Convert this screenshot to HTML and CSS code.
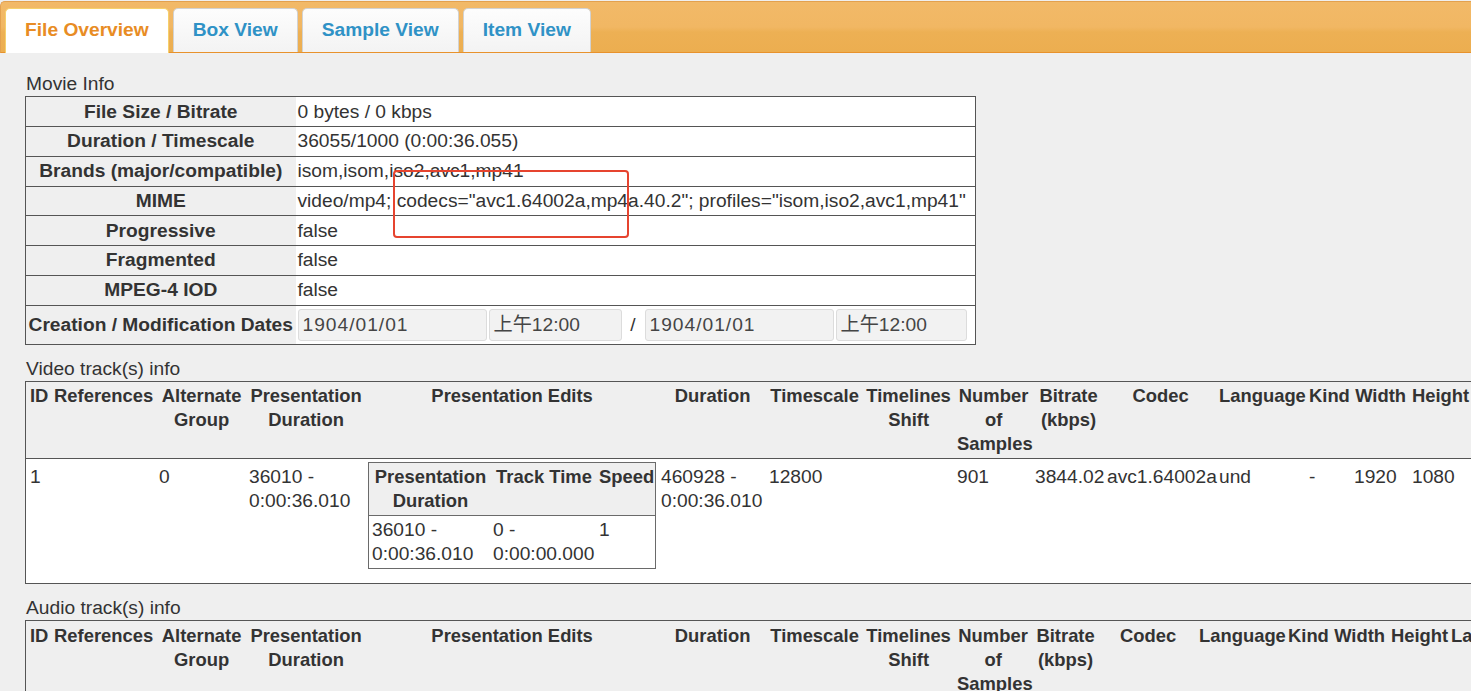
FILE: index.html
```html
<!DOCTYPE html>
<html lang="en">
<head>
<meta charset="utf-8">
<title>MP4 File Overview</title>
<link rel="stylesheet" href="styles.css">
</head>
<body>
<div class="tabs">
  <ul class="tab-nav">
    <li class="tab active">File Overview</li>
    <li class="tab">Box View</li>
    <li class="tab">Sample View</li>
    <li class="tab">Item View</li>
  </ul>
  <div class="panel">
    <div class="section-label">Movie Info</div>
    <table class="movie">
      <colgroup><col class="movie-label"><col></colgroup>
      <tr><th>File Size / Bitrate</th><td>0 bytes / 0 kbps</td></tr>
      <tr><th>Duration / Timescale</th><td>36055/1000 (0:00:36.055)</td></tr>
      <tr><th>Brands (major/compatible)</th><td>isom,isom,iso2,avc1,mp41</td></tr>
      <tr><th>MIME</th><td>video/mp4; codecs="avc1.64002a,mp4a.40.2"; profiles="isom,iso2,avc1,mp41"</td></tr>
      <tr><th>Progressive</th><td>false</td></tr>
      <tr><th>Fragmented</th><td>false</td></tr>
      <tr><th>MPEG-4 IOD</th><td>false</td></tr>
      <tr class="dates-row"><th>Creation / Modification Dates</th><td>
        <div class="dates">
          <span class="field date">1904/01/01</span>
          <span class="field time">上午12:00</span>
          <span class="sep">/</span>
          <span class="field date">1904/01/01</span>
          <span class="field time last">上午12:00</span>
        </div>
      </td></tr>
    </table>
    <div class="highlight"></div>

    <div class="section-label">Video track(s) info</div>
    <table class="tracks video">
      <colgroup>
        <col class="c-id"><col class="c-ref"><col class="c-alt"><col class="c-pres"><col class="c-edits"><col class="c-dur"><col class="c-ts"><col class="c-shift"><col class="c-num"><col class="v-bitrate"><col class="v-codec"><col class="v-lang"><col class="c-kind"><col class="c-width"><col class="v-height">
      </colgroup>
      <thead>
        <tr>
          <th>ID</th><th>References</th><th>Alternate<br>Group</th><th>Presentation<br>Duration</th><th>Presentation Edits</th><th>Duration</th><th>Timescale</th><th>Timelines<br>Shift</th><th>Number<br>of<br>Samples</th><th>Bitrate<br>(kbps)</th><th>Codec</th><th>Language</th><th>Kind</th><th>Width</th><th class="left-head">Height</th>
        </tr>
      </thead>
      <tbody>
        <tr>
          <td>1</td><td></td><td>0</td><td>36010 -<br>0:00:36.010</td>
          <td>
            <table class="edits">
              <colgroup><col class="e-pres"><col class="e-track"><col class="e-speed"></colgroup>
              <tr><th>Presentation<br>Duration</th><th>Track Time</th><th>Speed</th></tr>
              <tr><td>36010 -<br>0:00:36.010</td><td>0 -<br>0:00:00.000</td><td>1</td></tr>
            </table>
          </td>
          <td>460928 -<br>0:00:36.010</td><td>12800</td><td></td><td>901</td><td>3844.02</td><td>avc1.64002a</td><td>und</td><td>-</td><td>1920</td><td>1080</td>
        </tr>
      </tbody>
    </table>

    <div class="section-label">Audio track(s) info</div>
    <table class="tracks audio">
      <colgroup>
        <col class="c-id"><col class="c-ref"><col class="c-alt"><col class="c-pres"><col class="c-edits"><col class="c-dur"><col class="c-ts"><col class="c-shift"><col class="a-num"><col class="a-bitrate"><col class="a-codec"><col class="a-lang"><col class="c-kind"><col class="c-width"><col class="a-height"><col class="c-extra">
      </colgroup>
      <thead>
        <tr>
          <th>ID</th><th>References</th><th>Alternate<br>Group</th><th>Presentation<br>Duration</th><th>Presentation Edits</th><th>Duration</th><th>Timescale</th><th>Timelines<br>Shift</th><th>Number<br>of<br>Samples</th><th>Bitrate<br>(kbps)</th><th>Codec</th><th>Language</th><th>Kind</th><th>Width</th><th>Height</th><th class="left-head">Layer</th>
        </tr>
      </thead>
    </table>
  </div>
</div>
</body>
</html>
```
FILE: styles.css
```css
* {
  box-sizing: border-box;
}

html,
body {
  margin: 0;
  padding: 0;
  overflow: hidden;
  background: #efefef;
}

body {
  font-family: "Liberation Sans", "Noto Sans CJK SC", sans-serif;
  font-size: 19.2px;
  line-height: 24px;
  color: #333333;
}

/* ---------- tab header ---------- */
.tab-nav {
  list-style: none;
  margin: 1px 0 0;
  padding: 6px 4px 0;
  height: 52px;
  display: flex;
  align-items: flex-start;
  gap: 4px;
  background: linear-gradient(to bottom, #f2b968 0%, #f1b763 50%, #edb054 60%, #ecae50 100%);
  border: 1px solid #e3a14f;
  border-right: 0;
  border-bottom-color: #e8922c;
  border-radius: 5px 0 0 0;
}

.tab {
  font-weight: bold;
  white-space: nowrap;
  padding: 9px 19px 10px;
  border: 1px solid #d2d2d2;
  border-bottom: 0;
  border-radius: 5px 5px 0 0;
  background: linear-gradient(to bottom, #fdfdfd, #f3f3f3);
  color: #2f92c6;
}

.tab.active {
  background: #ffffff;
  border-color: #f6d06c;
  color: #e88c24;
  padding-bottom: 11px;
  margin-bottom: -1px;
}

/* ---------- panel ---------- */
.panel {
  position: relative;
  padding: 19.2px 0 0 25px;
}

.section-label {
  padding-left: 1px;
}

/* ---------- movie info ---------- */
.movie {
  border-collapse: collapse;
  table-layout: fixed;
  width: 951px;
  border: 1px solid #555555;
  margin-bottom: 12px;
}

.movie-label {
  width: 270px;
}

.movie th {
  font-weight: bold;
  text-align: center;
  white-space: nowrap;
  padding: 2.4px 2px;
  border-top: 1px solid #555555;
}

.movie td {
  background: #ffffff;
  white-space: nowrap;
  padding: 2.4px 2px;
  border-top: 1px solid #555555;
}

.movie .dates-row th,
.movie .dates-row td {
  padding-top: 3px;
  padding-bottom: 3px;
}

.dates {
  display: flex;
  align-items: center;
}

.field {
  display: block;
  height: 32px;
  line-height: 30px;
  padding-left: 4px;
  border: 1px solid #dcdcdc;
  border-radius: 3px;
  background: #f2f2f2;
  color: #454545;
}

.field.date {
  width: 189px;
  letter-spacing: 1px;
}

.field.time {
  width: 133px;
  margin-left: 2px;
}

.field.time.last {
  width: 131px;
}

.sep {
  width: 23px;
  text-align: center;
}

.highlight {
  position: absolute;
  left: 393px;
  top: 117px;
  width: 236px;
  height: 68px;
  border: 2.5px solid #e6442f;
  border-radius: 4px;
}

/* ---------- track tables ---------- */
.tracks {
  border-collapse: separate;
  border-spacing: 0;
  table-layout: fixed;
  border: 1px solid #555555;
  margin-bottom: 12px;
}

.tracks.video {
  width: 1484px;
}

.tracks.audio {
  width: 1503px;
}

.tracks > thead > tr > th {
  font-weight: bold;
  font-size: 18.4px;
  text-align: center;
  vertical-align: top;
  white-space: nowrap;
  padding: 2.4px 0.8px 2.4px 4px;
  border-bottom: 1px solid #555555;
}

.tracks > thead > tr > th.left-head {
  text-align: left;
}

.tracks > tbody > tr > td {
  background: #ffffff;
  vertical-align: baseline;
  white-space: nowrap;
  padding: 2.4px 0.8px 2.4px 4px;
}

.c-id { width: 23px; }
.c-ref { width: 106px; }
.c-alt { width: 90px; }
.c-pres { width: 119px; }
.c-edits { width: 293px; }
.c-dur { width: 108px; }
.c-ts { width: 96px; }
.c-shift { width: 92px; }
.c-num { width: 78px; }
.c-kind { width: 45px; }
.c-width { width: 58px; }
.c-extra { width: 80px; }

.v-bitrate { width: 72px; }
.v-codec { width: 112px; }
.v-lang { width: 90px; }
.v-height { width: 100px; }

.a-num { width: 77px; }
.a-bitrate { width: 68px; }
.a-codec { width: 97px; }
.a-lang { width: 89px; }
.a-height { width: 60px; }

/* ---------- nested edits table ---------- */
.edits {
  border-collapse: separate;
  border-spacing: 0;
  table-layout: fixed;
  width: 288px;
  border: 1px solid #6a6a6a;
  margin-bottom: 12px;
}

.e-pres { width: 121px; }
.e-track { width: 106px; }
.e-speed { width: 59px; }

.edits th {
  font-weight: bold;
  font-size: 18.4px;
  text-align: center;
  vertical-align: baseline;
  white-space: nowrap;
  background: #efefef;
  padding: 2px 1px 2px 3px;
  border-bottom: 1px solid #6a6a6a;
}

.edits td {
  background: #ffffff;
  vertical-align: top;
  white-space: nowrap;
  padding: 2px 1px 2px 3px;
}
```
